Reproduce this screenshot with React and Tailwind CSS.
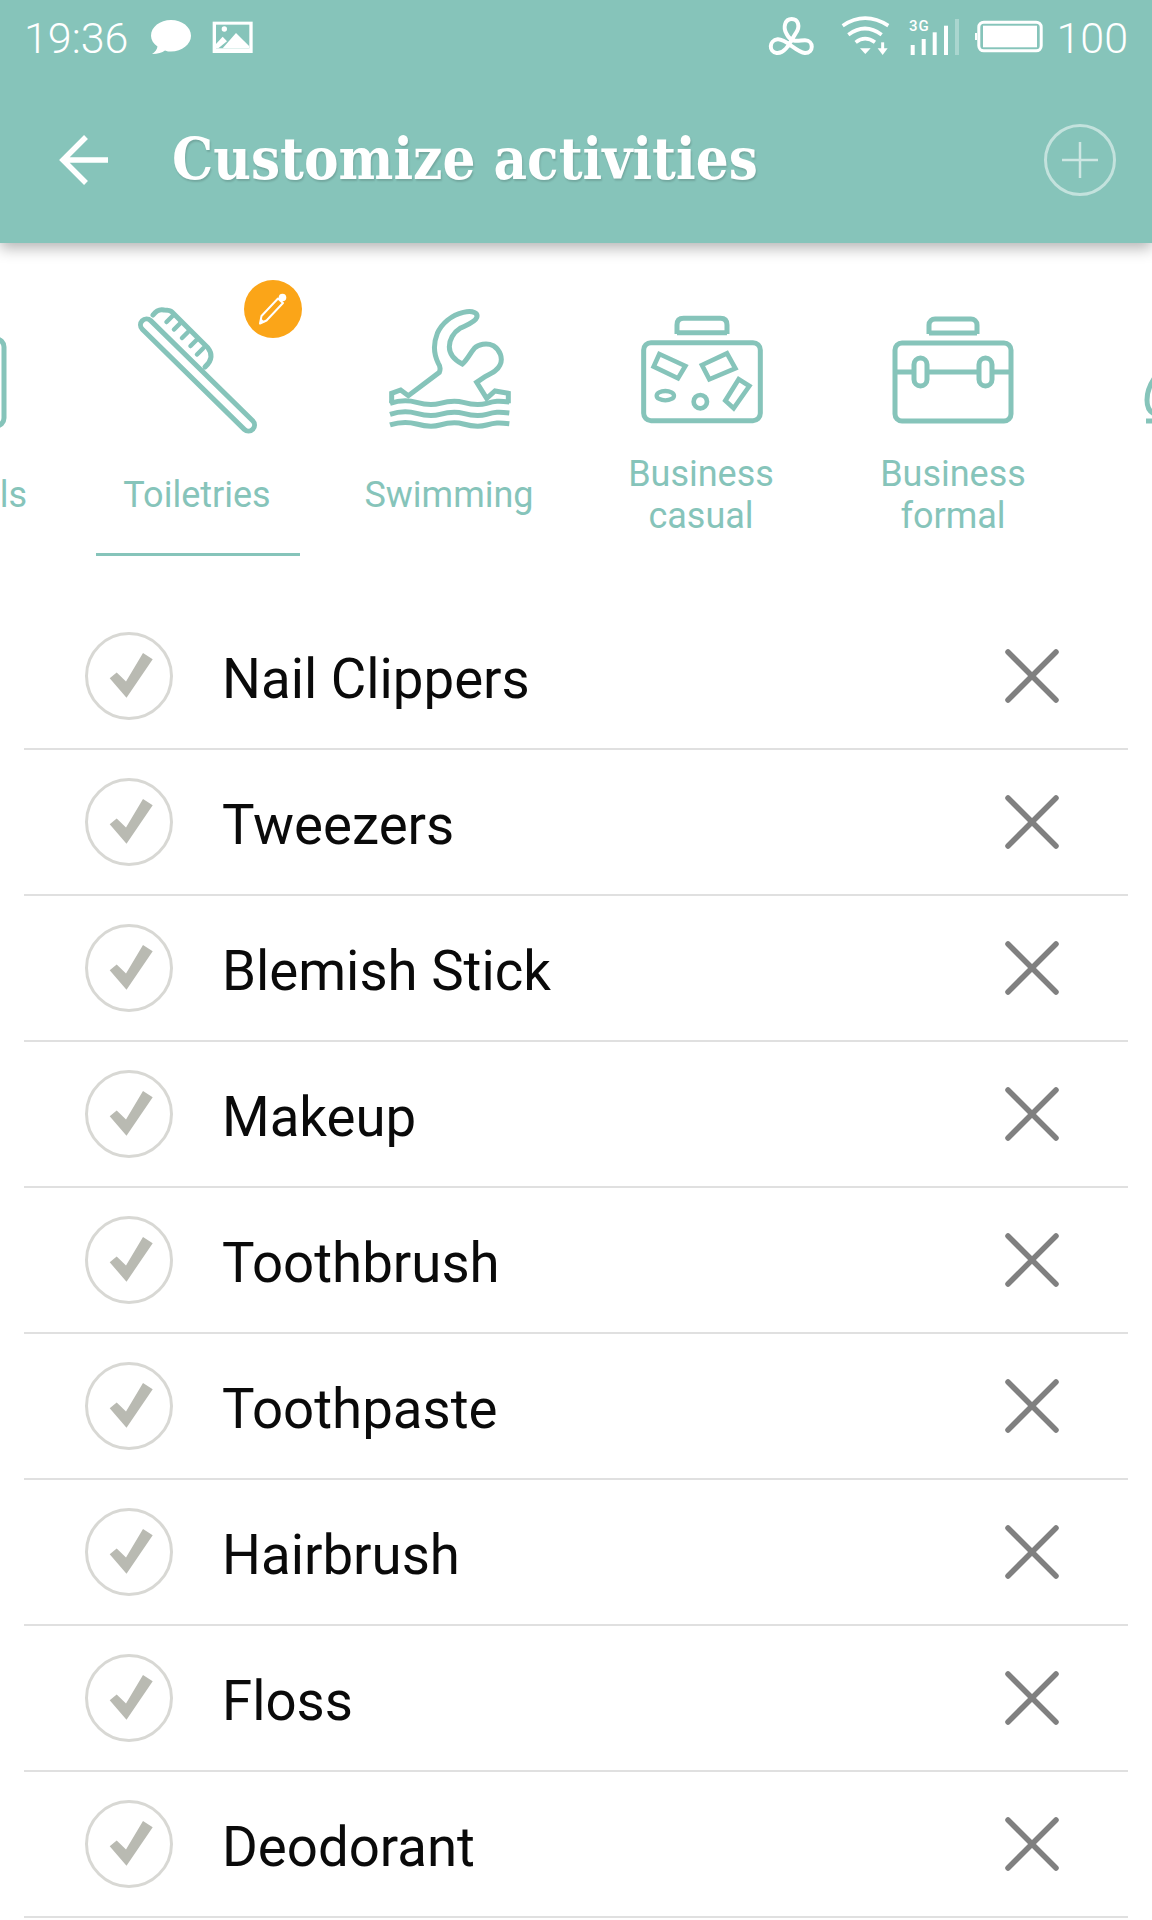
const items = [
  "Nail Clippers",
  "Tweezers",
  "Blemish Stick",
  "Makeup",
  "Toothbrush",
  "Toothpaste",
  "Hairbrush",
  "Floss",
  "Deodorant",
];

const TEAL = "#86c4ba";

function StatusLeft() {
  return (
    <svg width="112" height="50" viewBox="146 14 112 50" className="ml-[19px]">
      <path d="M170 21c11 0 20 7 20 15.700s-9 15.700-20 15.700c-2 0-4 0-6-1-3 2-7 3.600-13 3.600 3-2 5-4 5.500-7.500-4-3-6.500-6.500-6.500-10.800 0-8.700 9-15.700 20-15.700z" fill="#fff" />
      <g transform="translate(140 10) scale(0.3333)">
        <rect x="215" y="38" width="120" height="94" fill="#fff" />
        <rect x="225" y="47" width="100" height="71" fill={TEAL} />
        <circle cx="250" cy="60" r="8" fill="#fff" />
        <path d="M245 118L285 72l40 40v6z" fill="#fff" />
        <path d="M225 105l20-22 13 14-26 21h-7z" fill="#fff" />
      </g>
    </svg>
  );
}

function StatusRight() {
  return (
    <svg width="280" height="50" viewBox="766 14 280 50" fill="none">
      <g transform="translate(760 10) scale(0.3333)" stroke="#fff" strokeWidth="12">
        <path d="M80 75C68 55 75 30 95 30c20 0 27 23 12 43-15 23-30 62-57 59-24-3-24-38 3-41 25-2 55 38 82 41 27 0 27-38 0-38-20 0-40 10-55-19z" />
        <path d="M248 50Q315 5 385 50M265 77Q315 40 365 77M287 100Q315 78 345 100" strokeWidth="11" />
        <path d="M300 118h32l-16 17z" fill="#fff" stroke="none" />
        <path d="M368 100v20" strokeWidth="9" />
        <path d="M353 118h30l-15 20z" fill="#fff" stroke="none" />
      </g>
      <text x="909" y="32" fill="#fff" fontSize="15" fontFamily="Roboto, sans-serif" fontWeight="500" letterSpacing="1">
        3G
      </text>
      <rect x="910.700" y="46" width="4" height="10" fill="#fff" />
      <rect x="921.700" y="40" width="4" height="16" fill="#fff" />
      <rect x="932.700" y="33.300" width="4" height="22.700" fill="#fff" />
      <rect x="944" y="26.700" width="4" height="29.300" fill="#fff" />
      <rect x="955" y="20" width="4" height="36" fill="#fff" fillOpacity="0.3" />
      <rect x="978.800" y="23.200" width="62.400" height="28.600" rx="5" stroke="#fff" strokeWidth="3" />
      <rect x="983" y="26.700" width="54" height="21.600" fill="#fff" />
      <rect x="975" y="34" width="2" height="7" fill="#fff" />
    </svg>
  );
}

function SuitcaseEdge() {
  return (
    <svg width="140" height="140" viewBox="-125 300 140 140" fill="none" stroke={TEAL} strokeWidth="5">
      <rect x="-115" y="339" width="119" height="87" rx="8" />
    </svg>
  );
}

function BrushIcon() {
  return (
    <svg width="140" height="140" viewBox="127 300 140 140" fill="none" stroke={TEAL} strokeWidth="5" strokeLinecap="round">
      <rect x="120" y="369" width="155" height="12" rx="6" transform="rotate(44.500 197.500 375)" />
      <path d="M153 315c3-4 7-6 11-5 3 0 6 0 8 2l36 36c4 5 5 12-3 19" />
      <path d="M166.500 322l6-6M174 329.500l6-6M182 338l6-6M190.500 346l6-6M197 354.500l6-6" strokeWidth="4.500" />
    </svg>
  );
}

function SwimIcon() {
  return (
    <svg width="140" height="140" viewBox="379 300 140 140" fill="none" stroke={TEAL}>
      <g transform="translate(380 295) scale(0.3333)" strokeWidth="15">
        <path d="M35 325V295l27-10 23 17 93-70c4-10 4-17-3-27-15-30-15-60-3-90C185 85 215 60 250 52c30-7 45 3 40 16-5 14-30 22-50 32-20 12-32 35-32 55 0 25 22 43 39 52 15-12 23-32 36-47 12-12 37-18 57-8 20 13 30 38 20 58-8 18-25 25-45 35l-25 17 30 48 25-22 40 7v30" />
        <path d="M30 325c30-10 55-10 80-3s45 10 70 3 45-10 70-3 45 10 70 3 35-8 68-4" />
        <path d="M30 358c30-10 55-10 80-3s45 10 70 3 45-10 70-3 45 10 70 3 35-8 68-4" />
        <path d="M30 390c30-10 55-10 80-3s45 10 70 3 45-10 70-3 45 10 70 3 35-8 68-4" />
      </g>
    </svg>
  );
}

function CasualIcon() {
  return (
    <svg width="140" height="140" viewBox="631 300 140 140" fill="none" stroke={TEAL}>
      <g transform="translate(632 310) scale(0.3333)" strokeWidth="15">
        <path d="M135 72V45q0-20 20-20h110q20 0 20 20v27" />
        <path d="M135 68h150" />
        <rect x="35" y="98" width="350" height="234" rx="22" />
        <path d="M82 132l78 36-22 37-73-35z" strokeWidth="14" />
        <path d="M210 165l75-35 25 45-78 33z" strokeWidth="14" />
        <path d="M320 208l32 20-47 67-25-23z" strokeWidth="14" />
        <ellipse cx="100" cy="257" rx="26" ry="14" strokeWidth="13" />
        <circle cx="205" cy="275" r="20" strokeWidth="14" />
      </g>
    </svg>
  );
}

function FormalIcon() {
  return (
    <svg width="140" height="140" viewBox="884 300 140 140" fill="none" stroke={TEAL} strokeWidth="5">
      <path d="M930 334v-9c0-4 3-6 6-6h36c3 0 6 2 6 6v9" />
      <path d="M930 333h48" />
      <rect x="896" y="343" width="116" height="78" rx="7" />
      <path d="M896 372h19M929 372h50M993 372h19" />
      <rect x="915" y="358" width="13" height="28" rx="6.500" />
      <rect x="980" y="358" width="13" height="28" rx="6.500" />
    </svg>
  );
}

function NextIcon() {
  return (
    <svg width="140" height="140" viewBox="1135 300 140 140" fill="none" stroke={TEAL} strokeWidth="5">
      <path d="M1156 376c-6 8-9 16-9 24 0 6 2 12 8 14" />
      <path d="M1146 421h20" />
    </svg>
  );
}

function Tab({ label, active, children }) {
  return (
    <div className="relative w-[252px] shrink-0 pt-[57px]">
      <div className="flex justify-center">{children}</div>
      <div className="mt-[13px] flex h-[84px] items-center justify-center text-center text-[36px] leading-[42px] text-[#86c4ba]">
        {label}
      </div>
      <div className={`ml-[25px] mt-[16px] h-[3px] w-[204px] ${active ? "bg-[#86c4ba]" : "bg-transparent"}`} />
      {active && (
        <div className="absolute left-[173px] top-[37px] flex h-[58px] w-[58px] items-center justify-center rounded-full bg-[#fba518]">
          <svg width="34" height="34" viewBox="0 0 34 34" fill="none">
            <path d="M4 31.500l1.500-7.500L22 6.500l5 4.500L10.500 28.500z" stroke="#fff" strokeWidth="2" strokeLinejoin="round" />
            <path d="M4 31.500l1-5 4 3.500z" fill="#fff" />
            <circle cx="26.500" cy="5.500" r="3.800" fill="#fff" />
          </svg>
        </div>
      )}
    </div>
  );
}

function Row({ name }) {
  return (
    <div className="ml-[24px] flex h-[146px] w-[1104px] items-center border-b-2 border-[#e0e0e0]">
      <div className="ml-[61px] flex h-[88px] w-[88px] items-center justify-center rounded-full border-[3px] border-[#d8d8d4]">
        <svg width="48" height="48" viewBox="0 0 48 48">
          <path d="M4.700 26.300L11.700 20.500l9.300 9L38 1l9.700 6.300L21.500 45.700z" fill="#b9bab2" />
        </svg>
      </div>
      <div className="ml-[49px] flex-1 pt-[6px] text-[54.600px] leading-none text-[#0a0a0a]">{name}</div>
      <svg width="56" height="56" viewBox="0 0 56 56" className="mr-[68px]" fill="none">
        <path d="M4 4l48 48M52 4L4 52" stroke="#808080" strokeWidth="5.500" strokeLinecap="round" />
      </svg>
    </div>
  );
}

export default function App() {
  return (
    <div className="h-[1920px] w-[1152px] overflow-hidden bg-white font-['Roboto',sans-serif]">
      <header className="relative z-10 h-[243px] bg-[#86c4ba] text-white shadow-[0_5px_14px_rgba(0,0,0,0.3)]">
        <div className="flex h-[76px] items-center px-[24px]">
          <span className="text-[43px] font-light leading-none">19:36</span>
          <StatusLeft />
          <div className="ml-auto flex items-center">
            <StatusRight />
            <span className="ml-[10px] text-[43px] font-light leading-none">100</span>
          </div>
        </div>
        <div className="flex h-[167px] items-center">
          <svg width="52" height="52" viewBox="0 0 52 52" className="ml-[58px]" fill="none" stroke="#fff" strokeWidth="5.500">
            <path d="M50 26H6M28 3L5 26l23 23" />
          </svg>
          <h1 className="ml-[62px] font-['DejaVu_Serif_Condensed','DejaVu_Serif',serif] text-[57.600px] font-bold leading-none [text-shadow:1px_2px_2px_rgba(0,0,0,0.15)]">
            Customize activities
          </h1>
          <div className="ml-auto mr-[36px] flex h-[72px] w-[72px] items-center justify-center rounded-full border-[3px] border-white/50">
            <svg width="36" height="36" viewBox="0 0 36 36" stroke="#fff" strokeOpacity="0.6" strokeWidth="2.500">
              <path d="M0 18h36M18 0v36" />
            </svg>
          </div>
        </div>
      </header>

      <div className="ml-[-181px] flex h-[361px] overflow-hidden">
        <Tab label="Essentials">
          <SuitcaseEdge />
        </Tab>
        <Tab label="Toiletries" active>
          <BrushIcon />
        </Tab>
        <Tab label="Swimming">
          <SwimIcon />
        </Tab>
        <Tab label={<>Business<br />casual</>}>
          <CasualIcon />
        </Tab>
        <Tab label={<>Business<br />formal</>}>
          <FormalIcon />
        </Tab>
        <Tab label="">
          <NextIcon />
        </Tab>
      </div>

      {items.map((name) => (
        <Row key={name} name={name} />
      ))}
    </div>
  );
}
